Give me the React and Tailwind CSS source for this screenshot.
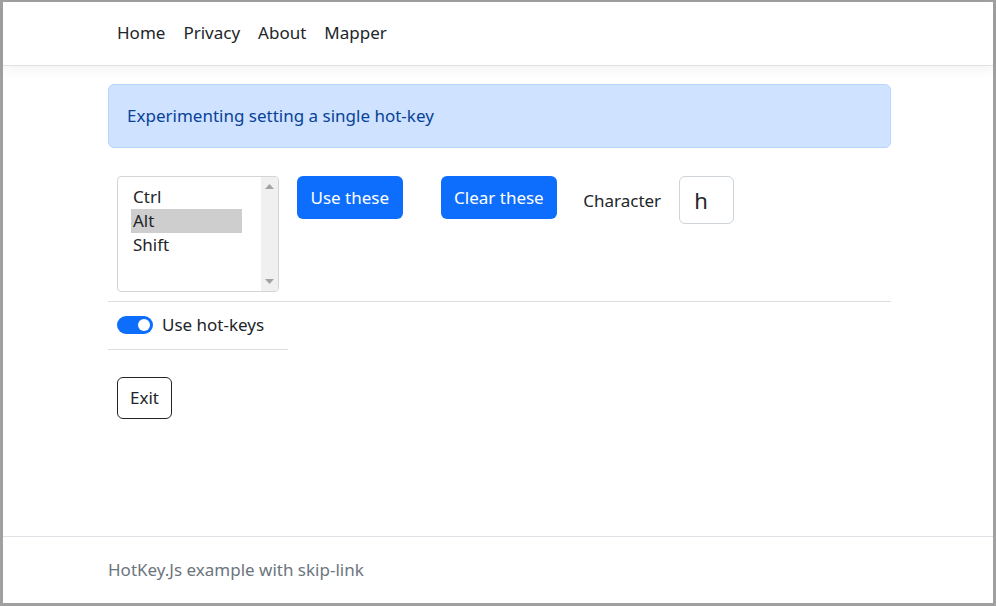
import React from 'react';

const links = ['Home', 'Privacy', 'About', 'Mapper'];

const KeyList = () => (
  <div className="flex w-[162px] h-[116px] border border-[#d4d4d4] rounded-[4px] overflow-hidden bg-white">
    <ul className="flex-1 pt-[8px] pl-[13px] pr-[19px] leading-[24px]">
      <li className="px-[2px]">Ctrl</li>
      <li className="px-[2px] bg-[#cecece]">Alt</li>
      <li className="px-[2px]">Shift</li>
    </ul>
    <div className="w-[17px] bg-[#f0f0f0] flex flex-col justify-between items-center py-[7px]">
      <svg width="9" height="5" viewBox="0 0 9 5"><path d="M0 5 L4.5 0 L9 5 Z" fill="#a3a3a3" /></svg>
      <svg width="9" height="5" viewBox="0 0 9 5"><path d="M0 0 L4.5 5 L9 0 Z" fill="#a3a3a3" /></svg>
    </div>
  </div>
);

export default function App() {
  return (
    <div className="w-[996px] h-[606px] border-[#a0a0a0] border-t-2 border-x-[3px] border-b-[3px] flex flex-col bg-white text-[#212529] font-['Noto_Sans',sans-serif] text-[17px]">
      {/* navbar */}
      <header className="h-[64px] shrink-0 border-b border-[#dee2e6] shadow-[0_4px_12px_rgba(0,0,0,0.05)] flex items-center">
        <nav className="w-[783px] ml-[105px] flex leading-[26px] -mt-[2px]">
          {links.map((l) => (
            <a key={l} className="px-[9px] text-[#212529]">{l}</a>
          ))}
        </nav>
      </header>

      <main className="flex-1">
        <div className="w-[783px] ml-[105px]">
          <div className="mt-[18px] h-[64px] flex items-center px-[18px] pb-px border border-[#b6d4fe] bg-[#cfe2ff] text-[#084298] rounded-[6px]">
            Experimenting setting a single hot-key
          </div>

          <div className="mt-[28px] pl-[9px] flex items-start">
            <KeyList />
            <button className="ml-[18px] h-[43px] px-[13.5px] rounded-[6px] bg-[#0d6efd] text-white">Use these</button>
            <button className="ml-[38px] h-[43px] px-[13.5px] rounded-[6px] bg-[#0d6efd] text-white">Clear these</button>
            <span className="ml-[26px] mt-[12px] leading-[26px]">Character</span>
            <div className="ml-[18px] w-[55px] h-[48px] border border-[#ced4da] rounded-[6px] flex items-center pl-[14px] text-[22px]">h</div>
          </div>

          <div className="mt-[9px] border-t border-[#dedede]" />

          <div className="pl-[9px] pt-[10px] pb-[11px] flex items-center gap-[9px] leading-[26px]">
            <div className="w-[36px] h-[18px] rounded-full bg-[#0d6efd] flex items-center justify-end pr-[3px]">
              <div className="w-[12px] h-[12px] rounded-full bg-white" />
            </div>
            <span>Use hot-keys</span>
          </div>

          <div className="w-[180px] border-t border-[#dedede]" />

          <div className="pl-[9px] mt-[27px]">
            <button className="h-[42px] px-[12px] pb-px border border-[#212529] rounded-[6px] bg-white">Exit</button>
          </div>
        </div>
      </main>

      <footer className="h-[67px] shrink-0 border-t border-[#dee2e6] flex items-center">
        <div className="w-[783px] ml-[105px] text-[#6c757d] leading-[26px]">HotKey.Js example with skip-link</div>
      </footer>
    </div>
  );
}
